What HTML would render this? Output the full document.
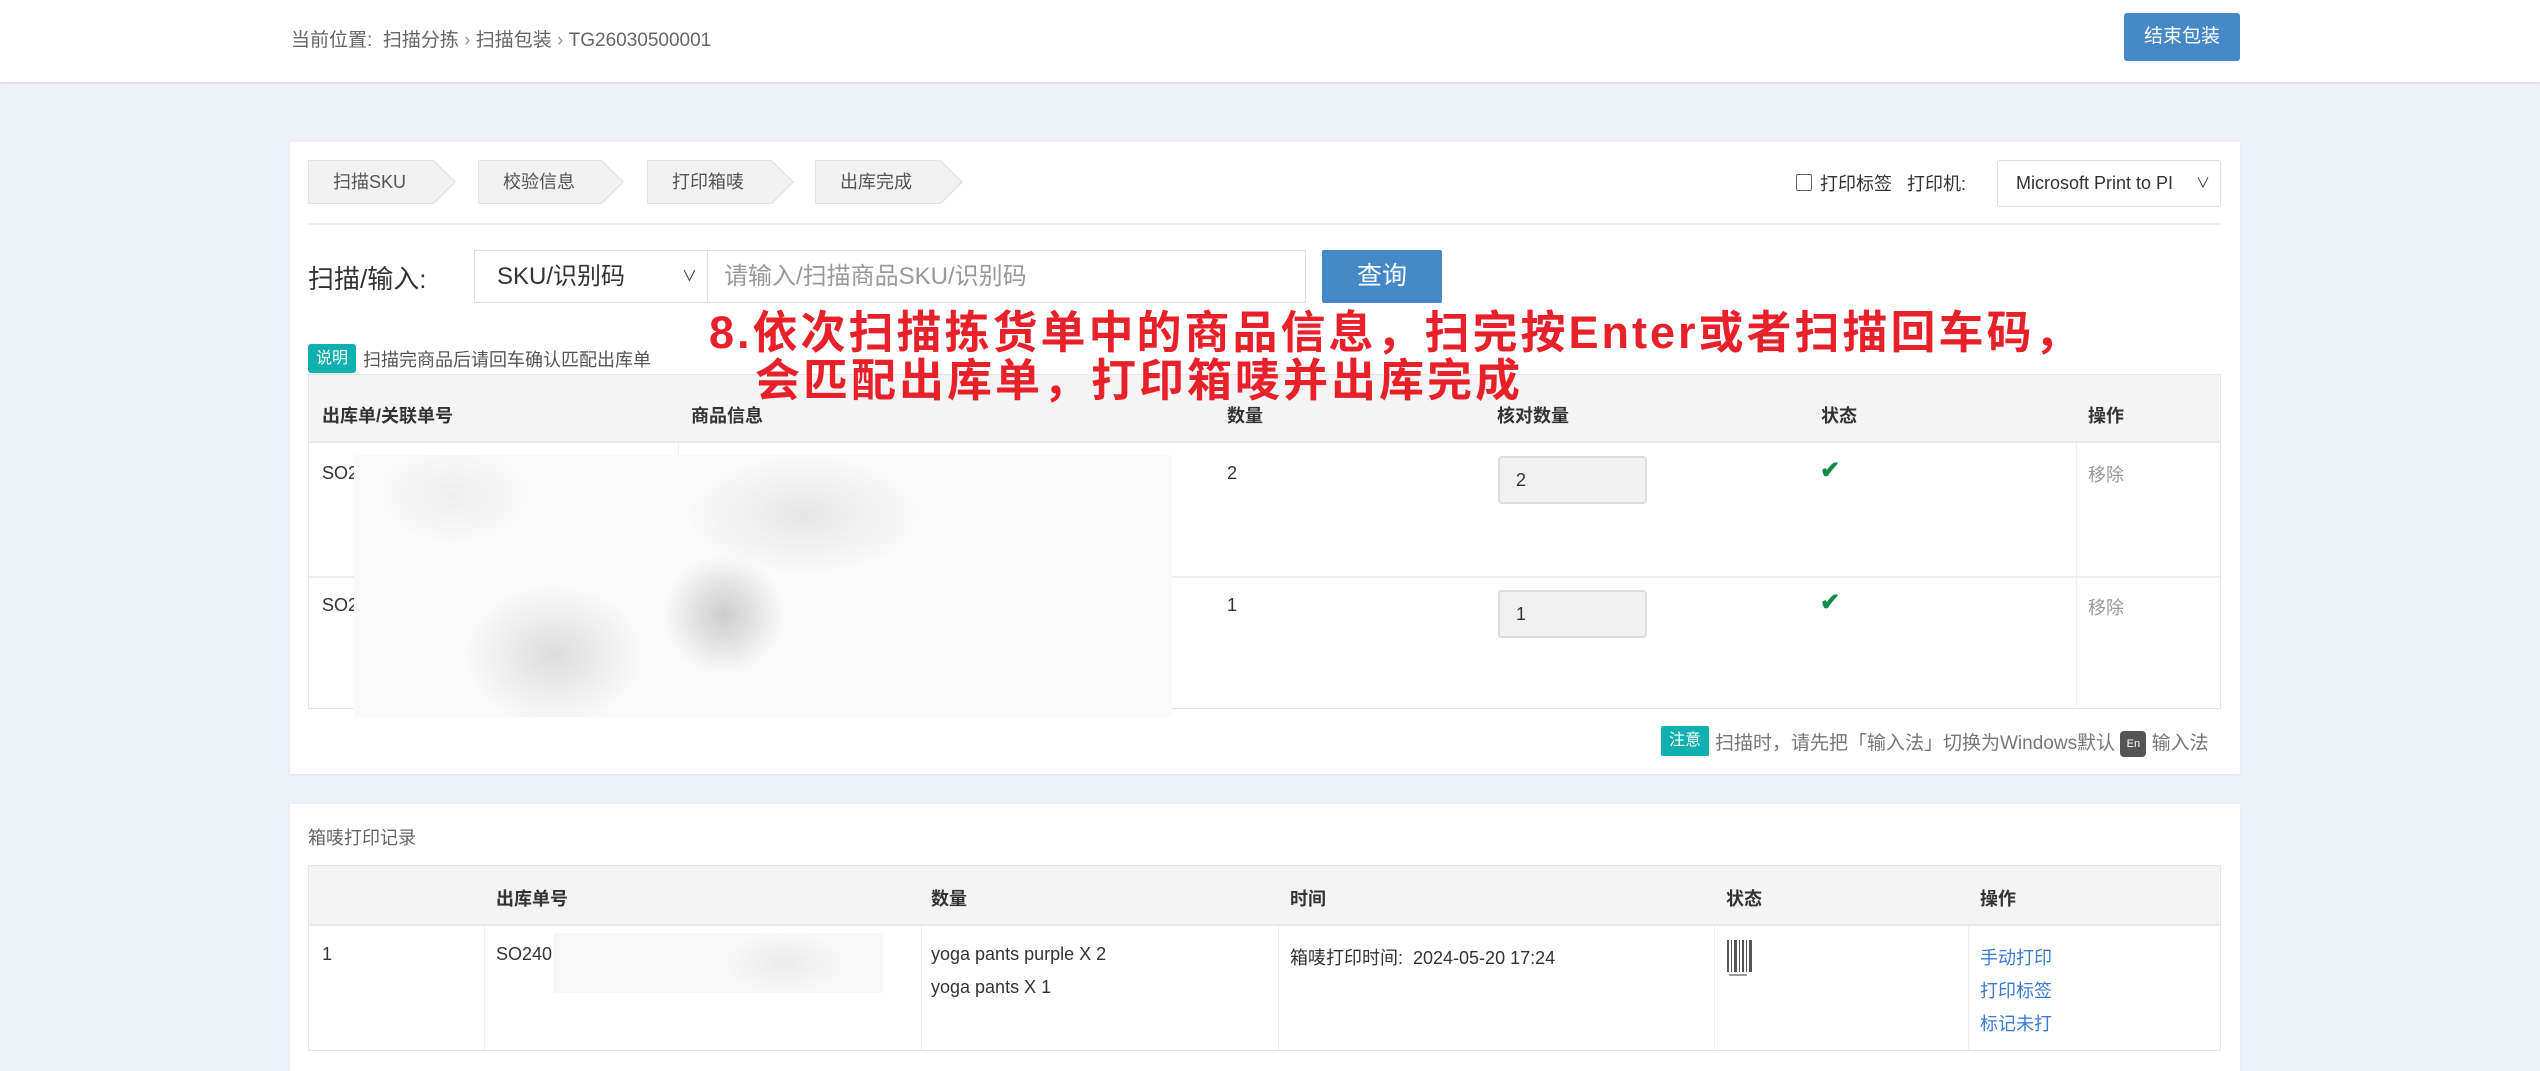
<!DOCTYPE html>
<html><head><meta charset="utf-8"><style>
*{margin:0;padding:0;box-sizing:border-box}
body{width:2540px;height:1071px;background:#edf1f8;font-family:"Liberation Sans","Noto Sans CJK SC",sans-serif;color:#333;position:relative;overflow:hidden}
.a{position:absolute;white-space:nowrap}
.hdr{left:0;top:0;width:2540px;height:82px;background:#fff;box-shadow:0 1px 3px rgba(0,0,0,.12)}
.card{background:#fff;box-shadow:0 1px 3px rgba(0,0,0,.06)}
.step{height:44px;background:#f2f2f2;border:1px solid #e3e3e3;border-right:none;font-size:18px;color:#555;line-height:42px;padding-left:24px}
.step:after{content:"";position:absolute;right:-22px;top:-1px;border-top:22px solid transparent;border-bottom:22px solid transparent;border-left:22px solid #e3e3e3}
.step:before{content:"";position:absolute;right:-20px;top:0;border-top:21px solid transparent;border-bottom:21px solid transparent;border-left:21px solid #f2f2f2;z-index:1}
.th{font-size:18px;font-weight:bold;color:#333}
.td{font-size:18px;color:#333}
.red{color:#e8202a;font-weight:bold;font-size:45px;letter-spacing:3px}
.lnk{color:#3a7bd5;font-size:18px}
</style></head><body>
<div class="a hdr"></div>
<div class="a" style="left:291px;top:25px;font-size:19px;color:#666">当前位置:&nbsp; 扫描分拣 <span style="color:#999">›</span> 扫描包装 <span style="color:#999">›</span> TG26030500001</div>
<div class="a" style="left:2124px;top:13px;width:116px;height:48px;background:#4488c8;border-radius:3px;color:#fff;font-size:19px;line-height:48px;text-align:center">结束包装</div>

<div class="a card" style="left:290px;top:142px;width:1950px;height:632px"></div>
<div class="a step" style="left:308px;top:160px;width:126px">扫描SKU</div>
<div class="a step" style="left:478px;top:160px;width:124px">校验信息</div>
<div class="a step" style="left:647px;top:160px;width:125px">打印箱唛</div>
<div class="a step" style="left:815px;top:160px;width:126px">出库完成</div>
<div class="a" style="left:1796px;top:174px;width:16px;height:17px;border:1px solid #666;border-radius:2px"></div>
<div class="a" style="left:1820px;top:170px;font-size:18px;color:#333">打印标签&nbsp;&nbsp; 打印机:</div>
<div class="a" style="left:1997px;top:160px;width:224px;height:47px;border:1px solid #ddd;border-radius:3px;font-size:18px;line-height:45px;padding-left:18px;color:#333">Microsoft Print to PI<span style="position:absolute;right:10px;font-size:14px">∨</span></div>
<div class="a" style="left:308px;top:223px;width:1913px;height:2px;background:#eee"></div>

<div class="a" style="left:308px;top:259px;font-size:26px;color:#333">扫描/输入:</div>
<div class="a" style="left:474px;top:250px;width:234px;height:53px;border:1px solid #ddd;font-size:24px;line-height:51px;padding-left:22px;color:#333">SKU/识别码<span style="position:absolute;right:10px;font-size:15px">∨</span></div>
<div class="a" style="left:707px;top:250px;width:599px;height:53px;border:1px solid #ddd;font-size:24px;line-height:51px;padding-left:16px;color:#999">请输入/扫描商品SKU/识别码</div>
<div class="a" style="left:1322px;top:250px;width:120px;height:53px;background:#4488c8;border-radius:2px;color:#fff;font-size:25px;line-height:53px;text-align:center">查询</div>

<div class="a" style="left:308px;top:344px;width:48px;height:29px;background:#10b0b0;border-radius:3px;color:#fff;font-size:16px;line-height:29px;text-align:center">说明</div>
<div class="a" style="left:363px;top:346px;font-size:18px;color:#555">扫描完商品后请回车确认匹配出库单</div>

<div class="a" style="left:308px;top:374px;width:1913px;height:335px;border:1px solid #e5e5e5"></div>
<div class="a" style="left:309px;top:375px;width:1911px;height:68px;background:#f4f4f4;border-bottom:2px solid #eaeaea"></div>
<div class="a th" style="left:322px;top:402px">出库单/关联单号</div>
<div class="a th" style="left:691px;top:402px">商品信息</div>
<div class="a th" style="left:1227px;top:402px">数量</div>
<div class="a th" style="left:1497px;top:402px">核对数量</div>
<div class="a th" style="left:1821px;top:402px">状态</div>
<div class="a th" style="left:2088px;top:402px">操作</div>
<div class="a" style="left:678px;top:443px;width:1px;height:266px;background:#eee"></div>
<div class="a" style="left:2076px;top:443px;width:1px;height:266px;background:#eee"></div>
<div class="a" style="left:309px;top:576px;width:1911px;height:2px;background:#eee"></div>
<div class="a td" style="left:322px;top:463px">SO2</div>
<div class="a td" style="left:322px;top:595px">SO2</div>
<div class="a" style="left:354px;top:455px;width:818px;height:262px;background:radial-gradient(ellipse 90px 70px at 200px 200px,#ddd,transparent),radial-gradient(ellipse 60px 60px at 370px 160px,#ccc,transparent),radial-gradient(ellipse 120px 60px at 450px 60px,#e6e6e6,transparent),radial-gradient(ellipse 80px 50px at 100px 40px,#eee,transparent),#fafafa"></div>
<div class="a td" style="left:1227px;top:463px">2</div>
<div class="a td" style="left:1227px;top:595px">1</div>
<div class="a" style="left:1498px;top:456px;width:149px;height:48px;background:#f1f1f1;border:2px solid #ddd;border-radius:4px;font-size:18px;line-height:44px;padding-left:16px">2</div>
<div class="a" style="left:1498px;top:590px;width:149px;height:48px;background:#f1f1f1;border:2px solid #ddd;border-radius:4px;font-size:18px;line-height:44px;padding-left:16px">1</div>
<div class="a" style="left:1820px;top:456px;color:#138a4e;font-size:24px;font-weight:bold">✔</div>
<div class="a" style="left:1820px;top:588px;color:#138a4e;font-size:24px;font-weight:bold">✔</div>
<div class="a" style="left:2088px;top:461px;font-size:18px;color:#999">移除</div>
<div class="a" style="left:2088px;top:594px;font-size:18px;color:#999">移除</div>

<div class="a" style="left:1661px;top:726px;width:48px;height:30px;background:#10b0b0;border-radius:2px;color:#fff;font-size:16px;line-height:30px;text-align:center">注意</div>
<div class="a" style="left:1715px;top:728px;font-size:19px;color:#777">扫描时，请先把「输入法」切换为Windows默认 <span style="display:inline-block;width:26px;height:26px;background:#555;color:#fff;border-radius:4px;font-size:11px;line-height:26px;text-align:center;vertical-align:middle">En</span> 输入法</div>

<div class="a red" style="left:709px;top:296px">8.依次扫描拣货单中的商品信息，扫完按Enter或者扫描回车码，</div>
<div class="a red" style="left:755px;top:344px">会匹配出库单，打印箱唛并出库完成</div>

<div class="a card" style="left:290px;top:804px;width:1950px;height:267px"></div>
<div class="a" style="left:308px;top:824px;font-size:18px;color:#666">箱唛打印记录</div>
<div class="a" style="left:308px;top:865px;width:1913px;height:186px;border:1px solid #e5e5e5"></div>
<div class="a" style="left:309px;top:866px;width:1911px;height:60px;background:#f4f4f4;border-bottom:2px solid #eaeaea"></div>
<div class="a th" style="left:496px;top:885px">出库单号</div>
<div class="a th" style="left:931px;top:885px">数量</div>
<div class="a th" style="left:1290px;top:885px">时间</div>
<div class="a th" style="left:1726px;top:885px">状态</div>
<div class="a th" style="left:1980px;top:885px">操作</div>
<div class="a" style="left:484px;top:926px;width:1px;height:125px;background:#eee"></div>
<div class="a" style="left:921px;top:926px;width:1px;height:125px;background:#eee"></div>
<div class="a" style="left:1278px;top:926px;width:1px;height:125px;background:#eee"></div>
<div class="a" style="left:1714px;top:926px;width:1px;height:125px;background:#eee"></div>
<div class="a" style="left:1968px;top:926px;width:1px;height:125px;background:#eee"></div>
<div class="a td" style="left:322px;top:944px">1</div>
<div class="a td" style="left:496px;top:944px">SO240</div>
<div class="a" style="left:554px;top:933px;width:329px;height:60px;background:radial-gradient(ellipse 60px 30px at 230px 30px,#eaeaea,transparent),#f8f8f8"></div>
<div class="a td" style="left:931px;top:944px">yoga pants purple X 2</div>
<div class="a td" style="left:931px;top:977px">yoga pants X 1</div>
<div class="a td" style="left:1290px;top:944px">箱唛打印时间:&nbsp; 2024-05-20 17:24</div>
<svg class="a" style="left:1726px;top:940px" width="38" height="38"><g fill="#555"><rect x="1" y="0" width="2" height="32"/><rect x="5" y="0" width="1" height="32"/><rect x="8" y="0" width="3" height="32"/><rect x="13" y="0" width="1" height="32"/><rect x="16" y="0" width="2" height="32"/><rect x="20" y="0" width="1" height="32"/><rect x="23" y="0" width="3" height="32"/><rect x="3" y="34" width="18" height="2" opacity=".6"/></g></svg>
<div class="a lnk" style="left:1980px;top:944px">手动打印</div>
<div class="a lnk" style="left:1980px;top:977px">打印标签</div>
<div class="a lnk" style="left:1980px;top:1010px">标记未打</div>
</body></html>
